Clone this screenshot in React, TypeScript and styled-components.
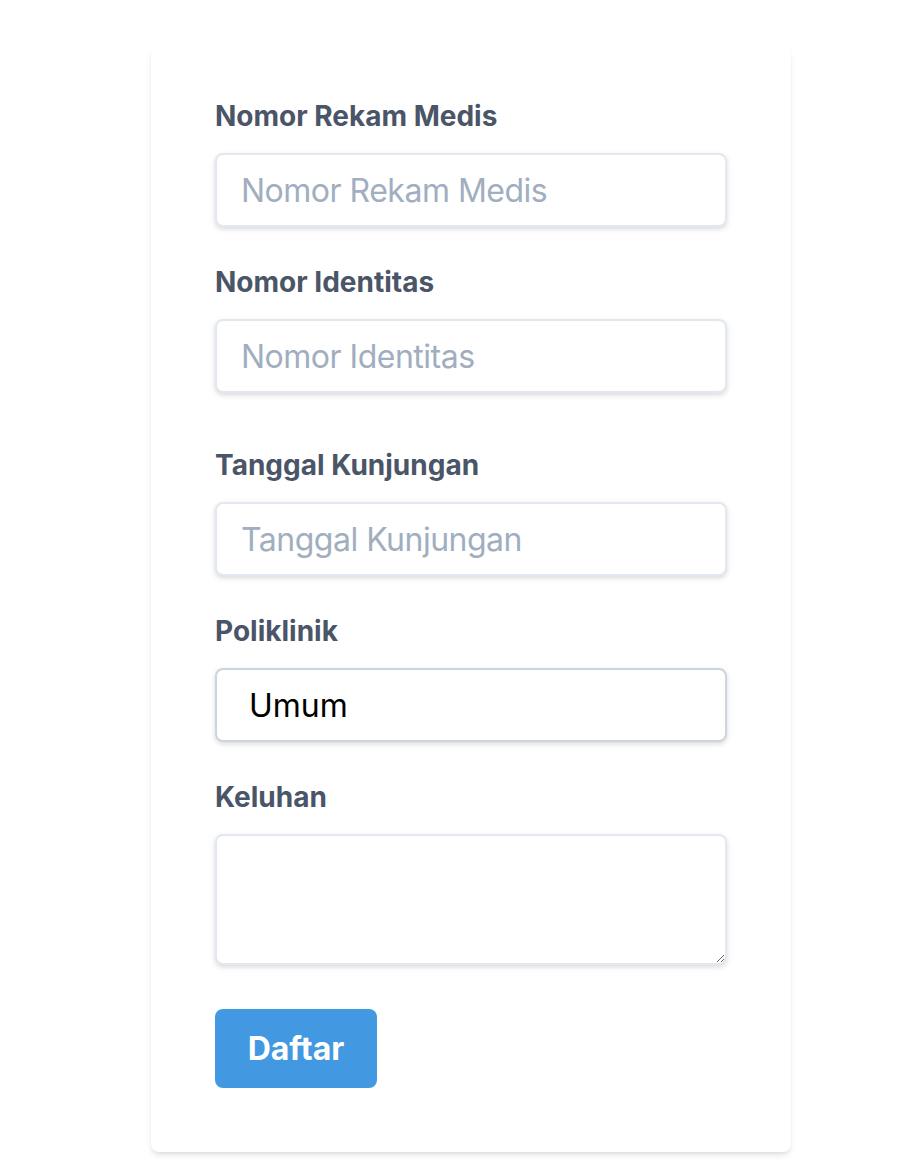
import React from 'react';
import styled, { createGlobalStyle } from 'styled-components';

const GlobalStyle = createGlobalStyle`
  html, body {
    margin: 0;
    padding: 0;
    background: #ffffff;
    font-family: Inter, "Noto Sans", "Liberation Sans", sans-serif;
  }
`;

const Page = styled.div`
  padding: 47px 0 40px 151px;
`;

const Card = styled.form`
  width: 640px;
  box-sizing: border-box;
  background: #fff;
  border-radius: 8px;
  padding: 49px 64px 64px;
  box-shadow: 0 4px 6px -1px rgba(0, 0, 0, 0.1), 0 2px 4px -1px rgba(0, 0, 0, 0.06);
`;

const Field = styled.div<{ gap?: number }>`
  margin-bottom: ${p => p.gap ?? 35}px;
`;

const Label = styled.label`
  display: block;
  color: #4a5568;
  font-size: 28px;
  font-weight: 700;
  line-height: 40px;
  margin-bottom: 17px;
`;

const fieldBase = `
  display: block;
  width: 100%;
  box-sizing: border-box;
  border-radius: 8px;
  background: #fff;
  font-family: Inter, "Noto Sans", "Liberation Sans", sans-serif;
  font-size: 32px;
  outline: none;
  box-shadow: 0 2px 6px rgba(0, 0, 0, 0.1), 0 2px 4px rgba(0, 0, 0, 0.06);
`;

const Input = styled.input`
  ${fieldBase}
  height: 74px;
  padding: 0 24px;
  border: 2px solid #e2e8f0;
  color: #4a5568;
  letter-spacing: -0.5px;
  &::placeholder {
    color: #a0aec0;
  }
`;

const Select = styled.select`
  ${fieldBase}
  appearance: none;
  height: 74px;
  padding: 0 32px;
  border: 2px solid #cbd5e0;
  color: #000;
`;

const TextArea = styled.textarea`
  ${fieldBase}
  height: 131px;
  padding: 16px 24px;
  border: 2px solid #e2e8f0;
  color: #4a5568;
`;

const Button = styled.button`
  height: 79px;
  width: 162px;
  border: none;
  border-radius: 8px;
  background: #4299e1;
  color: #fff;
  font-family: Inter, "Noto Sans", "Liberation Sans", sans-serif;
  font-size: 32px;
  font-weight: 700;
  cursor: pointer;
`;

const fields = [
  { id: 'rm', label: 'Nomor Rekam Medis', gap: 35 },
  { id: 'nik', label: 'Nomor Identitas', gap: 52 },
  { id: 'tgl', label: 'Tanggal Kunjungan', gap: 35 },
];

export default function App() {
  return (
    <>
      <GlobalStyle />
      <Page>
        <Card onSubmit={e => e.preventDefault()}>
          {fields.map(f => (
            <Field key={f.id} gap={f.gap}>
              <Label htmlFor={f.id}>{f.label}</Label>
              <Input id={f.id} type="text" placeholder={f.label} />
            </Field>
          ))}
          <Field>
            <Label htmlFor="poli">Poliklinik</Label>
            <Select id="poli" defaultValue="Umum">
              <option>Umum</option>
              <option>Gigi</option>
              <option>Anak</option>
            </Select>
          </Field>
          <Field gap={44}>
            <Label htmlFor="keluhan">Keluhan</Label>
            <TextArea id="keluhan" />
          </Field>
          <Button type="submit">Daftar</Button>
        </Card>
      </Page>
    </>
  );
}
